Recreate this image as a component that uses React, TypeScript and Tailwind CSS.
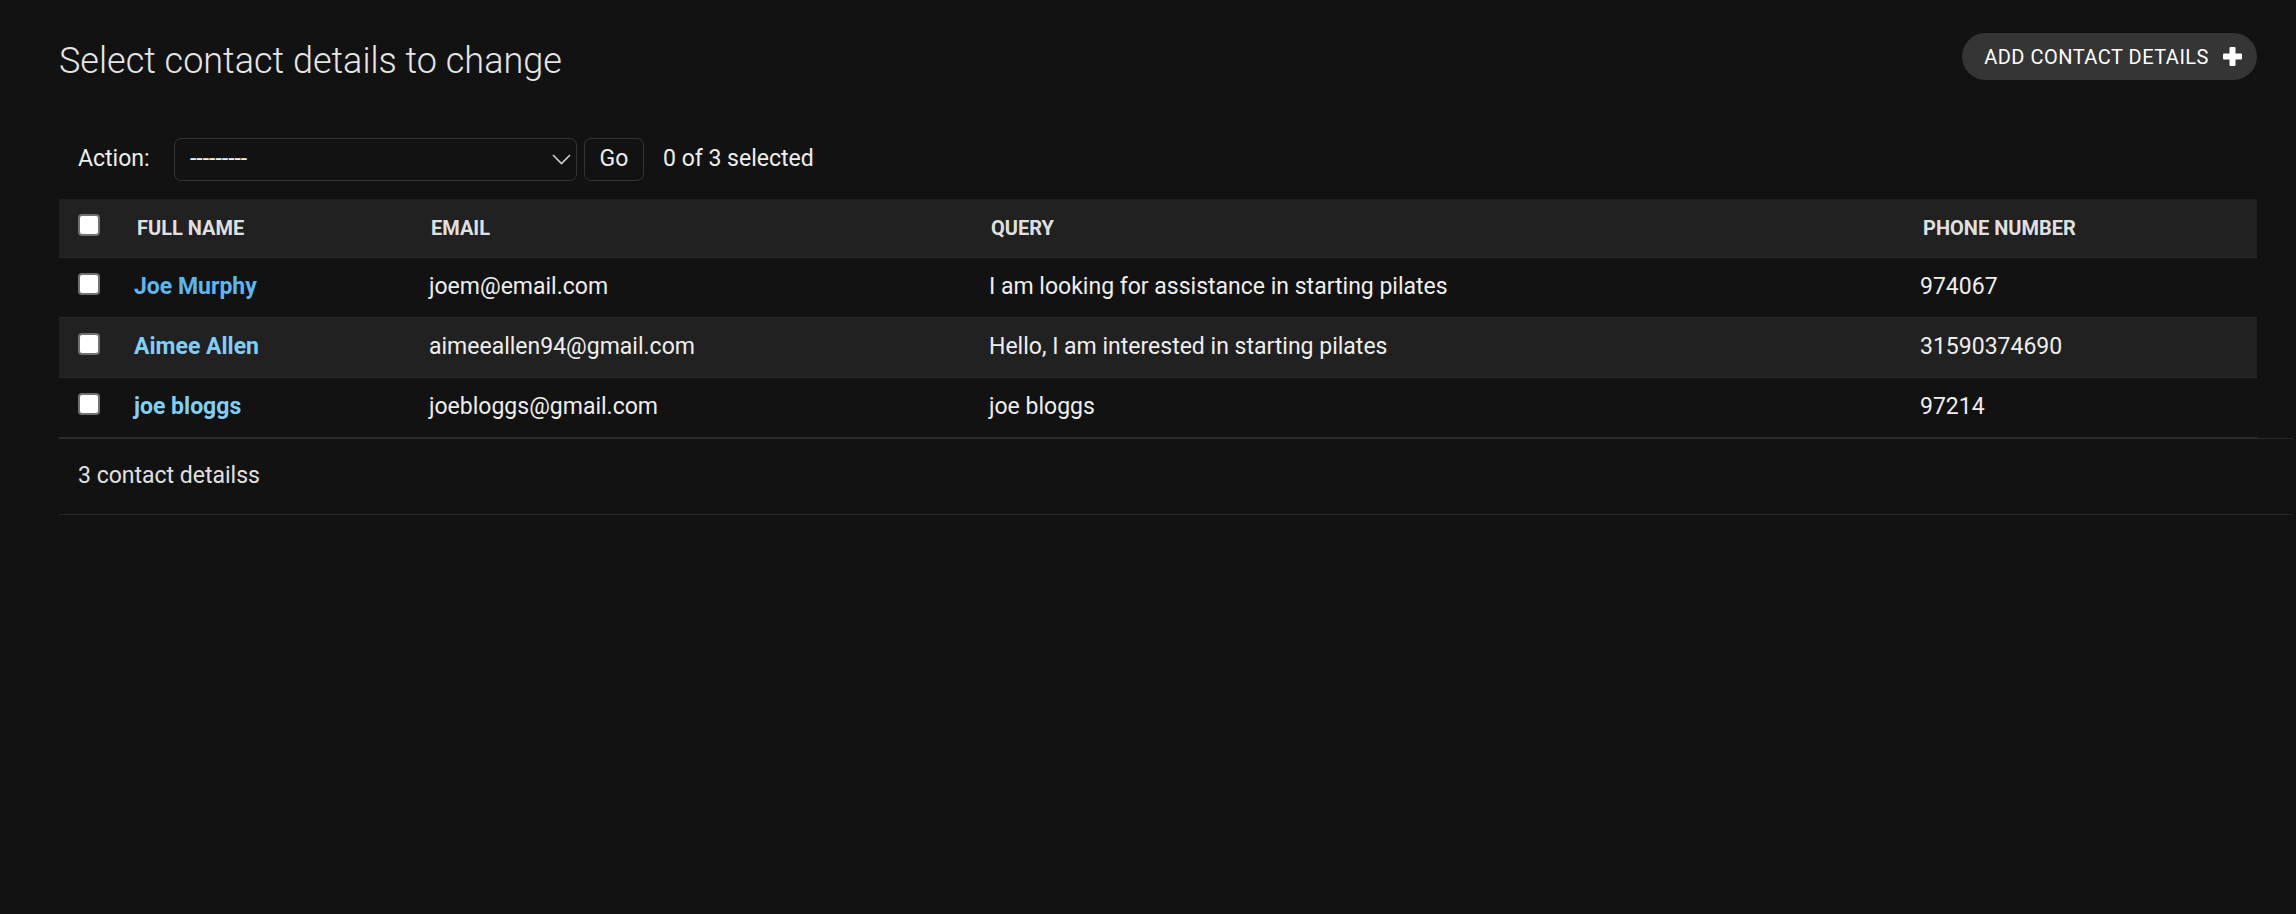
const rows = [
  { name: 'Joe Murphy', email: 'joem@email.com', query: 'I am looking for assistance in starting pilates', phone: '974067', hover: true },
  { name: 'Aimee Allen', email: 'aimeeallen94@gmail.com', query: 'Hello, I am interested in starting pilates', phone: '31590374690', hover: false },
  { name: 'joe bloggs', email: 'joebloggs@gmail.com', query: 'joe bloggs', phone: '97214', hover: false },
];

const cols = 'grid grid-cols-[60px_295px_560px_931px_1fr]';

function Checkbox() {
  return <span className="block w-[22px] h-[22px] bg-white border-2 border-[#707070] rounded-[4px]" />;
}

function PlusIcon() {
  return (
    <svg width="19" height="19" viewBox="0 0 19 19" className="shrink-0">
      <rect x="6.5" y="0" width="6" height="19" rx="1" fill="#fff" />
      <rect x="0" y="6.5" width="19" height="6" rx="1" fill="#fff" />
    </svg>
  );
}

function Chevron() {
  return (
    <svg width="19" height="11" viewBox="0 0 19 11" className="shrink-0">
      <polyline points="1,1 9.5,9.5 18,1" fill="none" stroke="#cfcfcf" strokeWidth="1.6" />
    </svg>
  );
}

export default function App() {
  return (
    <div className="min-h-[914px] w-full bg-[#121212] font-['Roboto',sans-serif] text-[#eeeeee]">
      <div className="pl-[59px] pr-[39px] pt-[33px]">
        <div className="flex items-start justify-between">
          <h1 className="mt-[6px] text-[36px] leading-[44px] font-light text-[#e6e6e6]">Select contact details to change</h1>
          <button className="flex h-[47px] items-center gap-[14px] rounded-full bg-[#353535] pl-[22px] pr-[15px] text-[20px] tracking-[0.5px] text-white">
            ADD CONTACT DETAILS
            <PlusIcon />
          </button>
        </div>

        <div className="mt-[55px] flex h-[43px] items-center pl-[19px] text-[23px]">
          <span className="w-[96px]">Action:</span>
          <div className="flex h-[43px] w-[403px] items-center justify-between rounded-[7px] border border-[#353535] pl-[15px] pr-[5px]">
            <span>---------</span>
            <Chevron />
          </div>
          <button className="ml-[7px] flex h-[43px] w-[60px] items-center justify-center rounded-[7px] border border-[#353535] text-[23px] text-[#eeeeee]">Go</button>
          <span className="ml-[19px]">0 of 3 selected</span>
        </div>

        <div className="mt-[18px]">
          <div className={`${cols} h-[59px] border-b border-[#2a2a2a] bg-[#212121] text-[20px] font-bold text-[#e0e0e0]`}>
            <div className="pl-[19px] pt-[15px]"><Checkbox /></div>
            <div className="flex items-center pl-[18px]">FULL NAME</div>
            <div className="flex items-center pl-[17px]">EMAIL</div>
            <div className="flex items-center pl-[17px]">QUERY</div>
            <div className="flex items-center pl-[18px]">PHONE NUMBER</div>
          </div>
          {rows.map((r, i) => (
            <div key={r.name} className={`${cols} h-[60px] border-b border-[#2a2a2a] text-[23px] ${i === 1 ? 'bg-[#212121]' : ''}`}>
              <div className="pl-[19px] pt-[15px]"><Checkbox /></div>
              <div className={`flex items-center pl-[15px] font-bold ${r.hover ? 'text-[#5db6ee]' : 'text-[#81cff6]'}`}>{r.name}</div>
              <div className="flex items-center pl-[15px]">{r.email}</div>
              <div className="flex items-center pl-[15px]">{r.query}</div>
              <div className="flex items-center pl-[15px]">{r.phone}</div>
            </div>
          ))}
          <div className="-mr-[36px] flex h-[77px] items-center border-y border-[#2a2a2a] pl-[19px] text-[23px] text-[#e0e0e0]">
            3 contact detailss
          </div>
        </div>
      </div>
    </div>
  );
}
